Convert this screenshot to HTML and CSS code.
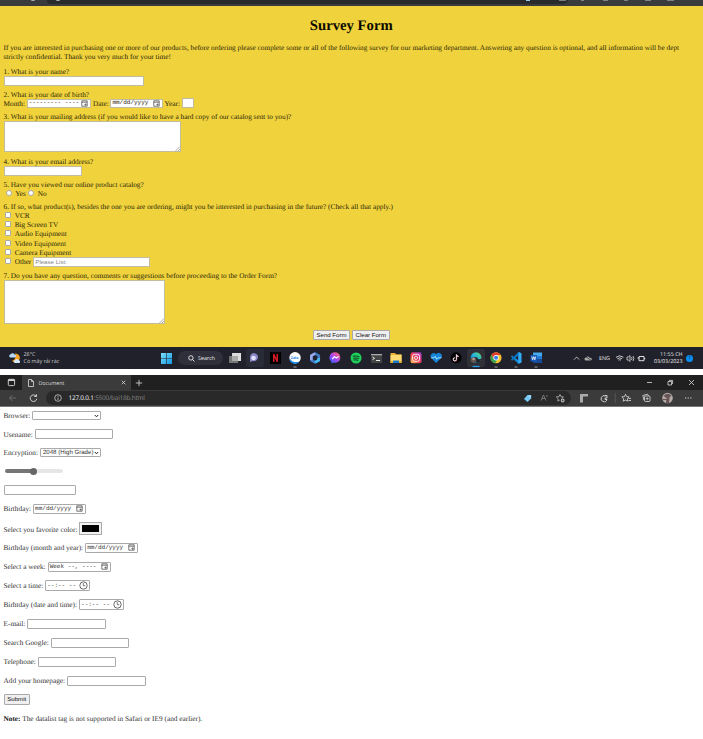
FILE: index.html
```html
<!DOCTYPE html>
<html lang="en">
<head>
<meta charset="utf-8">
<title>Survey Form</title>
<link rel="stylesheet" href="styles.css">
</head>
<body>
<svg class="defs" width="0" height="0">
  <defs>
    <symbol id="cal" viewBox="0 0 7 7"><path d="M.8.8h5.4v5.4H.8zM.8 2.2h5.4M4 4h1.1v1.1H4z" fill="none" stroke="#555" stroke-width=".8"/></symbol>
    <symbol id="clock" viewBox="0 0 9 9"><circle cx="4.5" cy="4.5" r="3.7" fill="none" stroke="#444" stroke-width=".8"/><path d="M4.3 2v2.7h2" fill="none" stroke="#444" stroke-width=".7"/></symbol>
    <symbol id="grip" viewBox="0 0 5 5"><path d="M.5 5 5 .5M3 5l2-2" stroke="#777" stroke-width=".6"/></symbol>
    <symbol id="chev" viewBox="0 0 5 4"><path d="M.8 1 2.5 2.800 4.200 1" fill="none" stroke="#222" stroke-width="1"/></symbol>
    <linearGradient id="win" x2="1" y2="1"><stop stop-color="#7be0fa"/><stop offset="1" stop-color="#1298e5"/></linearGradient>
    <linearGradient id="mess" x2=".8" y1="1" y2="0"><stop stop-color="#176bff"/><stop offset=".5" stop-color="#a044fa"/><stop offset="1" stop-color="#ff6470"/></linearGradient>
    <linearGradient id="insta" x2="1" y1="1" y2="0"><stop stop-color="#ffc94d"/><stop offset=".45" stop-color="#f23d50"/><stop offset="1" stop-color="#a23ad4"/></linearGradient>
    <linearGradient id="edge" x2="1" y1="1" y2="0"><stop stop-color="#0b64bc"/><stop offset=".5" stop-color="#24b5df"/><stop offset="1" stop-color="#67db68"/></linearGradient>
  </defs>
</svg>

<div class="strip">
  <svg width="703" height="6" viewBox="0 0 703 6"><path d="M47 0h171l350 0q-1 4-5 4H51q-4 0-4-4z" fill="#292a2c"/><path d="M31 0q2 1 4 0M56 0q2 1 4 0" stroke="#bbb" fill="none"/><path d="M526 0h4" stroke="#8dd0f0" stroke-width="2"/><path d="M559 0h7M581 0h3M603 0h5M624 0h4M645 0h6M667 0h7" stroke="#999" stroke-width="1.6"/></svg>
</div>

<form class="survey">
  <h1>Survey Form</h1>
  <p class="intro">If you are interested in purchasing one or more of our products, before ordering please complete some or all of the following survey for our marketing department. Answering any question is optional, and all information will be dept<br>strictly confidential. Thank you very much for your time!</p>

  <div class="q"><label>1. What is your name?</label><input class="name"></div>
  <div class="q q2"><label>2. What is your date of birth?</label>
    <div class="line birth"><span>Month:</span><span class="pick month">--------- ----<svg class="cal"><use href="#cal"/></svg></span><span>Date:</span><span class="pick date">mm/dd/yyyy<svg class="cal"><use href="#cal"/></svg></span><span>Year:</span><input class="year"></div>
  </div>
  <div class="q q3"><label>3. What is your mailing address (if you would like to have a hard copy of our catalog sent to you)?</label><div class="area mail"><svg><use href="#grip"/></svg></div></div>
  <div class="q q4"><label>4. What is your email address?</label><input class="email"></div>
  <div class="q q5"><label>5. Have you viewed our online product catalog?</label>
    <div class="line radios"><i class="dot"></i><span>Yes</span><i class="dot"></i><span>No</span></div>
  </div>
  <div class="q q6"><label>6. If so, what product(s), besides the one you are ordering, might you be interested in purchasing in the future? (Check all that apply.)</label>
    <div class="check"><i class="box"></i><span>VCR</span></div>
    <div class="check"><i class="box"></i><span>Big Screen TV</span></div>
    <div class="check"><i class="box"></i><span>Audio Equipment</span></div>
    <div class="check"><i class="box"></i><span>Video Equipment</span></div>
    <div class="check"><i class="box"></i><span>Camera Equipment</span></div>
    <div class="check"><i class="box"></i><span>Other</span><input class="other" placeholder="Please List:"></div>
  </div>
  <div class="q q7"><label>7. Do you have any question, comments or suggestions before proceeding to the Order Form?</label><div class="area comments"><svg><use href="#grip"/></svg></div></div>
  <div class="actions"><button type="button" class="send">Send Form</button><button type="button" class="clear">Clear Form</button></div>
</form>

<div class="taskbar">
  <svg class="weather" width="12" height="12" viewBox="0 0 12 12"><path d="M6 1.5a4.4 4.4 0 1 1-3 7.2C6 8.500 7 5 6 1.500z" fill="#f7a426"/><path d="M1.800 5.500a1.600 1.600 0 0 1 0-3.200 2.200 2.200 0 0 1 4 .4 1.400 1.400 0 0 1 0 2.800z" fill="#b9d7f8"/><path d="M6.300 11a1.500 1.500 0 0 1 0-3 2 2 0 0 1 3.700.300 1.400 1.400 0 0 1 .2 2.700z" fill="#d5e6fc"/></svg>
  <div class="forecast"><span>26°C</span><span>Có mây rải rác</span></div>
  <svg class="start" width="11" height="11" viewBox="0 0 11 11"><path d="M0 0h5.200v5.200H0zM5.800 0H11v5.200H5.800zM0 5.800h5.200V11H0zM5.800 5.800H11V11H5.800z" fill="url(#win)"/></svg>
  <div class="find"><svg width="7" height="7" viewBox="0 0 7 7"><circle cx="2.900" cy="2.900" r="2.200" fill="none" stroke="#eee" stroke-width=".9"/><path d="m4.500 4.500 2 2" stroke="#eee" stroke-width=".9"/></svg><span>Search</span></div>
  <div class="apps">
    <svg viewBox="0 0 20 22"><path d="M4 9h9v7H4z" fill="#777"/><path d="M7 6h9v8H7z" fill="#ddd"/><path d="M7 9h6v5H7z" fill="#aaa"/></svg>
    <svg viewBox="0 0 20 22"><rect x="1" y="2" width="18" height="18" rx="2" fill="#292b36"/><path d="M5 10a4 4 0 1 1 3 4l-3 1z" fill="#8a87c9"/><circle cx="8.500" cy="11" r="2.300" fill="#e5e2ff"/></svg>
    <svg viewBox="0 0 20 22"><path d="M5 5h11v12H5z" fill="#000"/><path d="M8.700 15V7.200l3.500 7.600V7" fill="none" stroke="#d51c25" stroke-width="1.500"/></svg>
    <svg viewBox="0 0 20 22"><circle cx="10" cy="10.700" r="5.700" fill="#fff"/><path d="M4.500 11.500a5.600 5.600 0 0 0 10 3c-4 1-7 .5-8-1z" fill="#168bf2"/><text x="5.800" y="11.700" font-size="3.600" font-weight="bold" fill="#087aeb">Zalo</text><path d="M8.500 20h3" stroke="#999"/></svg>
    <svg viewBox="0 0 20 22"><path d="m10 6.500 3.700 2.200v4.500L10 15.300l-3.700-2.100V8.700z" fill="none" stroke="#417bc8" stroke-width="2.600"/><path d="M6.300 13V8.700L10 6.500" fill="none" stroke="#9ca8ed" stroke-width="2.600"/><path d="m10 15.300 3.700-2.100V11" fill="none" stroke="#47b7ef" stroke-width="2.600"/></svg>
    <svg viewBox="0 0 20 22"><path d="M10.300 5.200a5.300 5.300 0 1 1-2 10.300l-2 1v-2A5.300 5.300 0 0 1 10.300 5.200z" fill="url(#mess)"/><path d="m7.200 12 2.200-2.400 1.800 1.500 2.300-1.600" fill="none" stroke="#fff" stroke-width="1.200"/></svg>
    <svg viewBox="0 0 20 22"><circle cx="10" cy="11" r="5.500" fill="#1fce5c"/><path d="M6.800 9.300q3.500-1 6.700.6M7.200 11.300q3-.8 5.600.5M7.500 13q2.500-.6 4.600.5" fill="none" stroke="#102817" stroke-width=".9"/></svg>
    <svg viewBox="0 0 20 22"><path d="M5 7h11v9H5z" fill="#444"/><path d="M5 7h11v1.300H5z" fill="#aaa"/><path d="m6.500 10 2 1.300-2 1.300M10 13.500h4" fill="none" stroke="#fff" stroke-width=".9"/></svg>
    <svg viewBox="0 0 20 22"><path d="M4.500 6H9l1 1.200h5.500V16h-11z" fill="#eab034"/><path d="M4.500 8h11v6.500h-11z" fill="#ffdb72"/><path d="M4.500 14h11v2h-11z" fill="#e5af32"/><path d="M7 13.500h6V16H7z" fill="#1c79c7"/></svg>
    <svg viewBox="0 0 20 22"><rect x="4.500" y="5.300" width="11" height="11" rx="2" fill="url(#insta)"/><rect x="6.500" y="7.300" width="7" height="7" rx="2" fill="none" stroke="#fff" stroke-width=".9"/><circle cx="10" cy="10.800" r="1.600" fill="none" stroke="#fff" stroke-width=".9"/></svg>
    <svg viewBox="0 0 20 22"><path d="M10 16 5.200 11A3 3 0 0 1 10 7.300 3 3 0 0 1 15.200 11z" fill="#1684d8"/><path d="M5 10.800h3l1.200-1.500 1.500 3 1.200-1.500h3.500" fill="none" stroke="#b5edff" stroke-width=".9"/></svg>
    <svg viewBox="0 0 20 22"><circle cx="10" cy="10.800" r="5.500" fill="#000"/><path d="M10.600 7.500v4.900a1.600 1.600 0 1 1-1.600-1.600M10.600 7.800q.4 1.500 2.200 1.700" fill="none" stroke="#ef4868" stroke-width="1.100"/><path d="M10.300 7.400v4.900a1.600 1.600 0 1 1-1.600-1.600M10.300 7.700q.4 1.500 2.200 1.700" fill="none" stroke="#d5ffff" stroke-width=".9"/></svg>
    <svg viewBox="0 0 20 22"><rect x="1" y="2" width="18" height="18" rx="2" fill="#303137"/><circle cx="10" cy="10.500" r="5.300" fill="url(#edge)"/><path d="M8.500 10q3-.5 3.500 2 2 1 3.300-.8-1 4.500-4.600 4.600-3-2-2.200-5.800z" fill="#20242a"/><circle cx="7.500" cy="13" r="2.800" fill="#66564f"/><circle cx="7.500" cy="12" r="1.200" fill="#baa298"/><path d="M6.500 19.500h7" stroke="#2d9bec" stroke-width="1.300"/></svg>
    <svg viewBox="0 0 20 22"><circle cx="10" cy="10.800" r="5.500" fill="#f7c52f"/><path d="M5.200 8A5.500 5.500 0 0 1 14.800 8H10l-2.300 4z" fill="#e43e31"/><path d="M5.200 8a5.500 5.500 0 0 0 4 8.200l2-3.500-3.500-.7z" fill="#34a652"/><circle cx="10" cy="10.800" r="2.700" fill="#fff"/><circle cx="10" cy="10.800" r="2" fill="#3b7ded"/><path d="M8.500 20h3" stroke="#999"/></svg>
    <svg viewBox="0 0 20 22"><path d="m12.300 5 3 1.300v9.200l-3 1.300-7.500-7.300 1.200-1 6.300 4.700z" fill="#1388d8"/><path d="m12.300 5 3 1.300v9.200l-3 1.300z" fill="#35adf4"/><path d="M12.300 8.500 6 13.800l-1.200-1L12.300 5z" fill="#0873be"/><path d="M8.500 20h3" stroke="#999"/></svg>
    <svg viewBox="0 0 20 22"><path d="M7 5.500h9V9H7z" fill="#47a8ed"/><path d="M7 9h9v3.500H7z" fill="#237bd3"/><path d="M7 12.500h9V16H7z" fill="#174b99"/><path d="M4.500 8h6.500v6.500H4.500z" fill="#1558b7"/><path d="m5.700 9.500.9 3.300 1.100-3.200 1.100 3.200.9-3.300" fill="none" stroke="#fff" stroke-width=".8"/><path d="M8.500 20h3" stroke="#999"/></svg>
  </div>
  <svg class="tray" width="22" height="10" viewBox="0 0 22 10"><path d="M1 6.700 3.700 4l2.700 2.700" fill="none" stroke="#ddd" stroke-width=".8"/><path d="M13 7.500a1.500 1.500 0 0 1 0-3 2 2 0 0 1 3.700.5 1.400 1.400 0 0 1 1.400 2.500z" fill="#aaa"/><path d="m12 3 7 5" stroke="#222" stroke-width=".7"/></svg>
  <span class="lang">ENG</span>
  <svg class="net" width="32" height="10" viewBox="0 0 32 10"><path d="M1 4.300q3.700-3 7.400 0M2.300 5.800q2.400-2 4.800 0M3.500 7.100q1.200-.8 2.400 0" fill="none" stroke="#ddd" stroke-width=".9"/><path d="M12 4h1.300L15 2.500v6L13.300 7H12zM16.500 4q1 1.500 0 3M18 3q1.700 2.500 0 5" fill="none" stroke="#ddd" stroke-width=".8"/><path d="M24 3.500h5v4.200h-5zM29.700 4.800v1.600M22.500 5h2" fill="none" stroke="#ddd"/></svg>
  <div class="time"><span>11:55 CH</span><span>03/03/2023</span></div>
  <i class="badge">1</i>
</div>

<div class="gap"></div>

<div class="tabs">
  <svg class="actionsicon" width="9" height="9" viewBox="0 0 9 9"><rect x="1.300" y="1.300" width="6.300" height="6.300" rx="1" fill="none" stroke="#ddd" stroke-width=".9"/><path d="M1.300 2.200h6.300" stroke="#ddd" stroke-width="1.500"/></svg>
  <div class="tab"><svg width="6" height="8" viewBox="0 0 6 8"><path d="M.5.5H3.500l2 2v5h-5zM3.500.5v2h2" fill="none" stroke="#ddd" stroke-width=".8"/></svg><span>Document</span><svg class="x" width="5" height="5" viewBox="0 0 5 5"><path d="m.7.700 3.600 3.600m0-3.600L.7 4.300" stroke="#ddd" stroke-width=".8"/></svg></div>
  <svg class="plus" width="8" height="8" viewBox="0 0 8 8"><path d="M4 .8v6.400M.8 4h6.400" stroke="#ddd" stroke-width=".8"/></svg>
  <svg class="controls" width="50" height="9" viewBox="0 0 50 9"><path d="M1 4.500h5M22 3.500h3.500v3.500H22zM23 2.400h3.600V6M43 2l5 5m0-5-5 5" fill="none" stroke="#ddd" stroke-width=".8"/></svg>
</div>
<div class="toolbar">
  <svg class="nav" width="31" height="10" viewBox="0 0 31 10"><path d="M8 5H1.500m3-3-3 3 3 3" fill="none" stroke="#777" stroke-width=".8"/><path d="M28 3a3.300 3.300 0 1 0 .8 2.800M28.500 1.300v2.200h-2.200" fill="none" stroke="#ddd" stroke-width=".9"/></svg>
  <div class="address">
    <svg class="info" width="8" height="8" viewBox="0 0 8 8"><circle cx="4" cy="4" r="3.300" fill="none" stroke="#ccc" stroke-width=".8"/><path d="M4 3.500V6M4 2v.8" stroke="#ccc" stroke-width=".8"/></svg>
    <span class="url"><b>127.0.0.1</b>:5500/bai18b.html</span>
    <svg class="pageicons" width="44" height="10" viewBox="0 0 44 10"><path d="m1 6 3.500-4h3.700v3.500L4.500 9z" fill="#78c8f3"/><circle cx="6.900" cy="3.200" r=".6" fill="#fff"/><path d="m18 7.500 2.500-5.500L23 7.500M19 5.500h3M23.700 2q.8 1 0 2" fill="none" stroke="#888" stroke-width=".8"/><path d="m37 1.500 1 2.200 2.400.2-1.800 1.600M36.700 7.200 34.800 8l.4-2.300-1.900-1.800 2.600-.2 1.100-2.200" fill="none" stroke="#bbb" stroke-width=".8"/><circle cx="39.700" cy="7.500" r="1.900" fill="#bbb"/><path d="M39.700 6.500v2M38.700 7.500h2" stroke="#333" stroke-width=".6"/></svg>
  </div>
  <svg class="tools" width="122" height="14" viewBox="0 0 122 14"><path d="M9 3h8v2.500H12v6H9z" fill="#aaa"/><path d="M34.500 5A3 3 0 1 0 36 8.500h-2V7h2V4.500h-2" fill="none" stroke="#ddd" stroke-width=".9"/><path d="M44.300 2v10" stroke="#666" stroke-width=".6"/><path d="m54.500 3.300 1.100 2.400 2.600.2-1.900 1.800.5 2.500-2.300-1.200-2.300 1.200.5-2.500-1.900-1.800 2.600-.2zM57.500 7.500h2.500M57.500 9.500h2.500" fill="none" stroke="#ddd" stroke-width=".8"/><path d="M73 9.300 71.800 4.500l4.700-1.300 1 1.500" fill="none" stroke="#ddd" stroke-width=".8"/><rect x="73.500" y="5" width="5.500" height="5.500" rx="1" fill="none" stroke="#ddd" stroke-width=".8"/><path d="M76.200 6.200v3M74.700 7.700h3" stroke="#ddd" stroke-width=".7"/><circle cx="96.500" cy="7" r="5.300" fill="#b4aaa4"/><path d="M92.500 5q4-4 8-.5l-2 2-.5 5.500h-3l.5-5z" fill="#665457"/><path d="M91.500 8.500h5" stroke="#655" stroke-width="1"/><path d="M114 7h1.200m1.400 0h1.200m1.400 0h1.200" stroke="#ddd" stroke-width="1.200"/></svg>
</div>

<form class="fields">
  <div><label>Browser:</label><span class="select w68"><svg><use href="#chev"/></svg></span></div>
  <div><label>Usename:</label><input class="w78"></div>
  <div><label>Encryption:</label><span class="select enc">2048 (High Grade)<svg><use href="#chev"/></svg></span></div>
  <div><span class="range"><i></i></span></div>
  <div><input class="w72"></div>
  <div><label>Birthday:</label><span class="pick w53">mm/dd/yyyy<svg class="cal"><use href="#cal"/></svg></span></div>
  <div><label class="drop">Select you favorite color:</label><span class="color"><i></i></span></div>
  <div><label>Birthday (month and year):</label><span class="pick w53">mm/dd/yyyy<svg class="cal"><use href="#cal"/></svg></span></div>
  <div><label>Select a week:</label><span class="pick w63">Week --, ----<svg class="cal"><use href="#cal"/></svg></span></div>
  <div><label>Select a time:</label><span class="pick w44">--:-- --<svg class="clock"><use href="#clock"/></svg></span></div>
  <div><label>Birhtday (date and time):</label><span class="pick w44">--:-- --<svg class="clock"><use href="#clock"/></svg></span></div>
  <div><label>E-mail:</label><input class="w78"></div>
  <div><label>Search Google:</label><input class="w78"></div>
  <div><label>Telephone:</label><input class="w78"></div>
  <div><label>Add your homepage:</label><input class="w78"></div>
  <div><button type="button" class="submit">Submit</button></div>
  <div><p><b>Note:</b> The datalist tag is not supported in Safari or IE9 (and earlier).</p></div>
</form>
</body>
</html>
```
FILE: styles.css
```css
* { box-sizing: border-box; }
html, body { margin: 0; height: 739px; overflow: hidden; }
body {
  width: 703px;
  background: #fff;
  font: 7.31px/9px "Liberation Serif", serif;
  color: #222;
  text-rendering: geometricPrecision;
}
.defs { position: absolute; }
svg { flex: none; display: block; }
p, h1 { margin: 0; }
label { white-space: nowrap; }

input, .area, .pick, .select {
  border: 1px solid #aaa;
  border-radius: 1px;
  background: #fff;
  padding: 0 1px;
  margin: 0;
  height: 10px;
  font: 6.1px/8px "Liberation Sans", sans-serif;
  flex: none;
}
button {
  border: 1px solid #aaa;
  border-radius: 1px;
  background: #efefef;
  color: #111;
  padding: 0;
  height: 10px;
  font: 6.1px/8px "Liberation Sans", sans-serif;
}
.pick {
  display: flex;
  align-items: center;
  justify-content: space-between;
  font: 6px/8px "Liberation Mono", monospace;
  white-space: pre;
}
.cal { width: 7px; height: 7px; margin-right: 1px; }
.clock { width: 9px; height: 9px; }

.strip { height: 6px; background: #3a3b3d; }
.survey { height: 341px; background: #f0d23c; padding-left: 3.500px; color: #2b2608; }
.survey h1 {
  height: 38px;
  margin-left: -4px;
  text-align: center;
  font-size: 14.7px;
  line-height: 40px;
  color: #0c0a00;
}
.intro { height: 23px; line-height: 8.7px; white-space: nowrap; }
.survey input, .survey .area, .survey .pick { border-color: #c3bda0; border-radius: 0; }
.q { height: 22.5px; }
.q > label { display: block; height: 9px; }
.q > input { display: block; }
.line { display: flex; align-items: center; gap: 2px; height: 9px; }
.birth { gap: 1.700px; }
.survey .pick { height: 9px; }
.name { width: 140.500px; }
.month { width: 64.500px; }
.date { width: 52.500px; }
.survey .year { width: 12px; }
.area { display: flex; justify-content: flex-end; align-items: flex-end; padding: 0; }
.area svg { width: 5px; height: 5px; }
.q3 { height: 45px; }
.mail { width: 177.5px; height: 30.5px; }
.email { width: 78px; }
.dot { width: 6px; height: 6px; border: 1px solid #aaa; border-radius: 50%; background: #fff; margin: 0 1.700px 0 2px; }
.radios .dot:nth-of-type(2) { margin-left: 0; margin-right: 2px; }
.q6 { height: 68.5px; }
.check { display: flex; align-items: center; height: 9.2px; }
.box { width: 6px; height: 6px; border: 1px solid #aaa; border-radius: 1px; background: #fff; margin: -1px 3.700px 0 1.500px; }
.other { width: 117px; margin-left: 2px; }
.other::placeholder { color: #888; }
.comments { width: 161.5px; height: 44px; }
.q7 { height: 59.500px; }
.actions { display: flex; justify-content: center; gap: 2px; margin-left: -4px; }
.send { width: 37px; }
.clear { width: 37.500px; }

.taskbar {
  display: flex;
  align-items: center;
  height: 22px;
  background: #20212a;
  color: #eee;
  font: 5.4px/7px "Open Sans", sans-serif;
}
.weather { margin-left: 8.500px; }
.forecast { display: flex; flex-direction: column; margin-left: 3px; width: 137.500px; color: #ccc; }
.find {
  display: flex;
  align-items: center;
  gap: 3px;
  width: 45px;
  height: 14px;
  margin-left: 6px;
  padding-left: 10px;
  border-radius: 7px;
  background: #2f303b;
}
.apps { display: flex; margin-left: 2px; width: 322px; }
.apps svg { width: 20.100px; height: 22px; }
.tray { margin-left: 26px; }
.lang { width: 14px; margin-left: 4px; }
.net { margin-left: 2px; }
.time { display: flex; flex-direction: column; text-align: right; width: 35.500px; white-space: nowrap; }
.badge {
  width: 7px;
  height: 7px;
  margin-left: 3.500px;
  border-radius: 50%;
  background: #0a8df2;
  color: #102844;
  text-align: center;
  font-style: normal;
  font-size: 4.500px;
}
.gap { height: 6px; }

.tabs { display: flex; align-items: center; height: 15px; background: #202020; color: #ddd; }
.actionsicon { margin: 0 11px 0 6.500px; }
.tab {
  display: flex;
  align-items: center;
  width: 109px;
  height: 15px;
  margin-left: -5px;
  padding: 0 5px 0 6px;
  background: #3b3b3b;
  font: 5.3px/8px "Open Sans", sans-serif;
}
.tab span { margin-left: 5px; }
.tab .x { margin-left: auto; }
.plus { margin-left: 4px; }
.controls { margin-left: auto; margin-right: 7px; }
.toolbar { display: flex; align-items: center; height: 17px; background: #3b3b3b; border-bottom: 1px solid #777; }
.nav { margin-left: 7.500px; }
.address {
  display: flex;
  align-items: center;
  width: 525px;
  height: 14px;
  margin-left: 7.500px;
  padding-left: 7.500px;
  border-radius: 7px;
  background: #292929;
}
.url { margin-left: 7px; color: #888; font: 6.4px/8px "Open Sans", sans-serif; letter-spacing: -.2px; }
.url b { font-weight: 400; color: #fff; }
.pageicons { margin-left: auto; margin-right: 4px; }

.fields {
  display: grid;
  grid-template-rows: 18.500px 18.500px 18.500px 18px 19px 19px 20px 19px 19px 19px 19px 19px 19px 19px 19px 18.500px 19px;
  margin-top: -.5px;
  padding-left: 3.500px;
  color: #333;
}
.fields > div { display: flex; align-items: center; gap: 2px; }
.select { display: flex; align-items: center; justify-content: space-between; white-space: nowrap; height: 9px; line-height: 9px; }
.select svg { width: 5px; height: 4px; margin-left: auto; }
.w68 { width: 69px; }
.w72 { width: 72.500px; }
.w78 { width: 78.500px; }
.enc { width: 61.500px; padding-left: 2px; }
.w53 { width: 53px; }
.w63 { width: 63px; }
.w44 { width: 44.500px; height: 11px; }
.range {
  display: flex;
  align-items: center;
  width: 58.500px;
  height: 4px;
  margin-left: 1px;
  border-radius: 2px;
  background: linear-gradient(90deg, #757575 50%, #e6e6e6 50%);
}
.range i { width: 7px; height: 7px; margin-left: 25.500px; border-radius: 50%; background: #666; flex: none; }
.color { width: 23px; height: 13px; padding: 2px; border: 1px solid #aaa; background: #f1f1f1; }
.color i { display: block; height: 7px; background: #000; }
.drop { padding-top: 3px; }
.submit { width: 26.500px; height: 10.500px; }
.fields b { color: #111; }
```
